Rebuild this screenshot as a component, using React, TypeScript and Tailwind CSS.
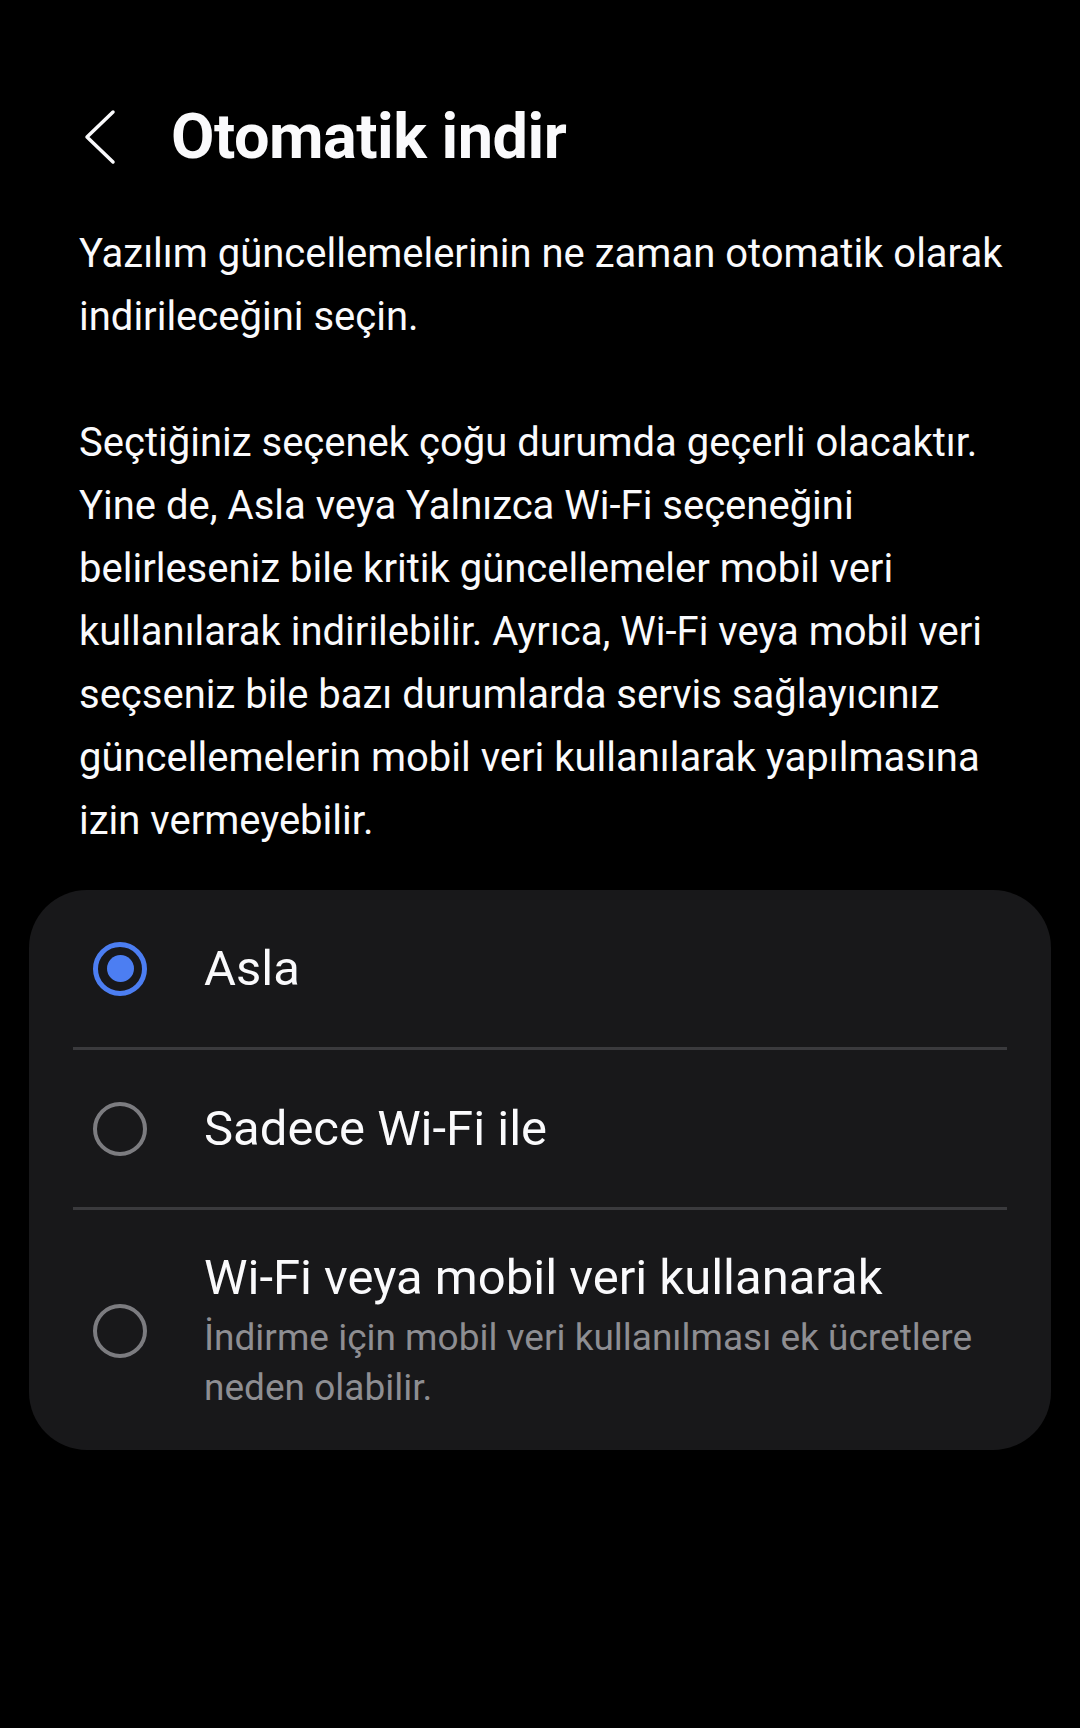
import { useState } from "react";

type Option = {
  id: string;
  label: string;
  hint?: string[];
};

const options: Option[] = [
  { id: "never", label: "Asla" },
  { id: "wifi", label: "Sadece Wi-Fi ile" },
  {
    id: "any",
    label: "Wi-Fi veya mobil veri kullanarak",
    hint: ["İndirme için mobil veri kullanılması ek ücretlere", "neden olabilir."],
  },
];

const intro = ["Yazılım güncellemelerinin ne zaman otomatik olarak", "indirileceğini seçin."];

const notice = [
  "Seçtiğiniz seçenek çoğu durumda geçerli olacaktır.",
  "Yine de, Asla veya Yalnızca Wi-Fi seçeneğini",
  "belirleseniz bile kritik güncellemeler mobil veri",
  "kullanılarak indirilebilir. Ayrıca, Wi-Fi veya mobil veri",
  "seçseniz bile bazı durumlarda servis sağlayıcınız",
  "güncellemelerin mobil veri kullanılarak yapılmasına",
  "izin vermeyebilir.",
];

function Radio({ checked }: { checked: boolean }) {
  if (checked) {
    return (
      <span className="flex h-[54px] w-[54px] shrink-0 items-center justify-center rounded-full border-[5px] border-[#4c7ef2]">
        <span className="h-[27px] w-[27px] rounded-full bg-[#4c7ef2]" />
      </span>
    );
  }
  return (
    <span className="h-[54px] w-[54px] shrink-0 rounded-full border-[4px] border-[#7c7c80]" />
  );
}

export default function App() {
  const [selected, setSelected] = useState("never");

  return (
    <div
      className="h-[1728px] w-[1080px] overflow-hidden bg-black pt-[97px] text-[#fafafc]"
      style={{ fontFamily: "Roboto, 'Noto Sans', sans-serif" }}
    >
      <header className="flex h-[80px] items-center pl-[84px]">
        <svg width="32" height="56" viewBox="0 0 32 56" fill="none" aria-hidden="true">
          <path
            d="M29 3 L3 28 L29 53"
            stroke="#fafafc"
            strokeWidth="3.5"
            strokeLinecap="round"
            strokeLinejoin="round"
          />
        </svg>
        <h1 className="ml-[55px] text-[63px] font-bold tracking-[-0.5px]">Otomatik indir</h1>
      </header>

      <div className="mt-[45px] px-[79px] text-[40px] leading-[63px]">
        <p>
          {intro.map((line) => (
            <span key={line} className="block whitespace-nowrap">
              {line}
            </span>
          ))}
        </p>
        <p className="mt-[63px]">
          {notice.map((line) => (
            <span key={line} className="block whitespace-nowrap">
              {line}
            </span>
          ))}
        </p>
      </div>

      <div className="mx-[29px] mt-[38px] rounded-[58px] bg-[#18181a]">
        {options.map((option, i) => (
          <div key={option.id}>
            {i > 0 ? <div className="mx-[44px] h-[3px] bg-[#3a3a3d]" /> : null}
            <button
              type="button"
              onClick={() => setSelected(option.id)}
              className={
                option.hint
                  ? "flex w-full items-center pb-[37px] pl-[64px] pr-[44px] pt-[38px] text-left"
                  : "flex h-[157px] w-full items-center pl-[64px] pr-[44px] text-left"
              }
            >
              <Radio checked={selected === option.id} />
              <span className="ml-[57px] flex flex-col">
                <span className="whitespace-nowrap text-[49px] leading-[60px]">{option.label}</span>
                {option.hint ? (
                  <span className="mt-[5px] text-[37px] leading-[50px] text-[#8e8e92]">
                    {option.hint.map((line) => (
                      <span key={line} className="block whitespace-nowrap">
                        {line}
                      </span>
                    ))}
                  </span>
                ) : null}
              </span>
            </button>
          </div>
        ))}
      </div>
    </div>
  );
}
